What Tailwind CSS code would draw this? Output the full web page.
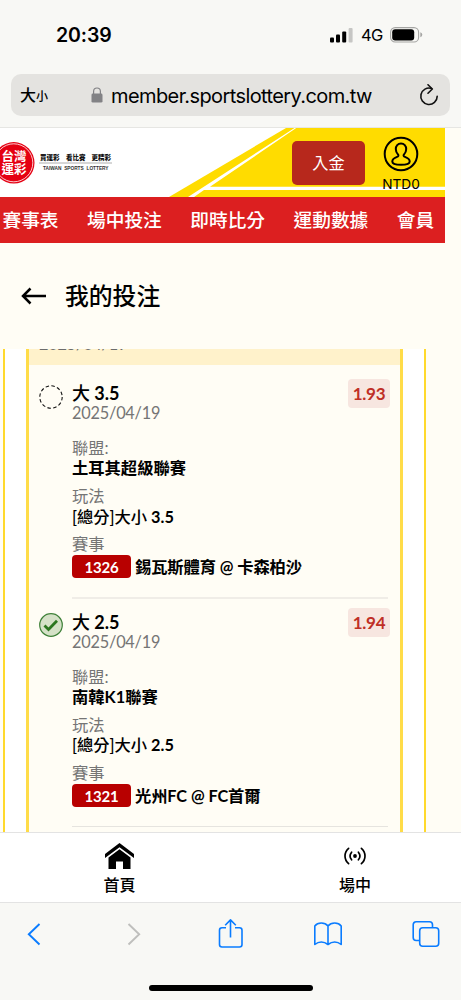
<!DOCTYPE html>
<html lang="zh-Hant">
<head>
  <meta charset="UTF-8" />
  <meta name="viewport" content="width=device-width, initial-scale=1.0" />
  <title>我的投注</title>
  <script src="https://cdn.jsdelivr.net/npm/@tailwindcss/browser@4"></script>
</head>
<body class="w-[461px] h-[1000px] overflow-hidden flex flex-col bg-[#fffdf5] text-black font-['Lato','Noto_Sans_CJK_TC',sans-serif]">

  <!-- Status bar + address bar -->
  <div class="h-[128px] shrink-0 bg-[#f8f8f5] border-b border-[#e6e6e3] font-['Inter','Noto_Sans_CJK_TC',sans-serif]">
    <div class="h-[74px] pt-[21px] pl-[56px] pr-[38px] flex items-start justify-between">
      <span class="text-[19.5px] leading-[28px] font-semibold tracking-[-0.1px]">20:39</span>
      <div class="flex items-center h-[28px]">
        <svg class="w-[23px] h-[15px]" viewBox="0 0 23 15">
          <rect x="0" y="9.5" width="4" height="5" rx="1" />
          <rect x="6" y="6.5" width="4" height="8" rx="1" />
          <rect x="12.2" y="3.5" width="4" height="11" rx="1" />
          <rect x="18.6" y="0" width="4" height="14.5" rx="1" fill="#c6c6c4" />
        </svg>
        <span class="text-[16.5px] ml-[8px] w-[22px] tracking-[-0.6px]">4G</span>
        <svg class="w-[33px] h-[16px] ml-[7px]" viewBox="0 0 33 16">
          <rect x="0.6" y="0.6" width="28" height="14.4" rx="4.6" fill="none" stroke="#a5a5a3" stroke-width="1.1" />
          <rect x="2.2" y="2.2" width="22" height="11.2" rx="3" />
          <path d="M30.3 5.3q2 .8 2 2.5t-2 2.5z" fill="#a5a5a3" />
        </svg>
      </div>
    </div>
    <div class="mx-[11px] h-[42px] rounded-[10px] bg-[#e4e3e0] flex items-center pl-[9px] pr-[11px]">
      <span class="text-[16px] font-medium leading-none">大</span><span class="text-[12px] font-medium leading-none pt-[3px]">小</span>
      <svg class="w-[12px] h-[16px] ml-[43px]" viewBox="0 0 12 16">
        <path d="M2.6 7V4.4a3.4 3.4 0 0 1 6.8 0V7" fill="none" stroke="#828285" stroke-width="1.2" />
        <rect x="0.5" y="6.6" width="11" height="9" rx="1.4" fill="#828285" />
      </svg>
      <span class="ml-[8px] pt-[1px] text-[20px] leading-none whitespace-nowrap w-[262px] tracking-[-0.6px]">member.sportslottery.com.tw</span>
      <svg class="w-[20px] h-[23px] ml-auto" viewBox="0 0 20 23" fill="none" stroke="#111" stroke-width="1.6" stroke-linecap="round" stroke-linejoin="round">
        <path d="M12.600 4.500A8.200 8.200 0 1 0 18.200 12.300" />
        <path d="M9 .8l4.3 4.2L9 9.200" />
      </svg>
    </div>
  </div>

  <!-- Site header -->
  <header class="relative w-[445px] h-[69px] shrink-0 bg-white">
    <svg class="absolute inset-0 w-[445px] h-[69px]" viewBox="0 0 445 69">
      <path d="M169 69L286 0H445V69z" fill="#ffdc00" />
      <path d="M188 69L294.500 0h1.700L210 58.800H445v3.200H204L194 69z" fill="#fff" />
    </svg>
    <div class="relative flex h-full">
      <svg class="w-[115px] h-[69px] shrink-0" viewBox="0 0 115 69">
        <circle cx="13.800" cy="34.800" r="20.700" fill="#e50012" />
        <circle cx="13.800" cy="34.800" r="19" fill="none" stroke="#fff" stroke-width="0.8" />
        <g fill="#fff" font-family="Noto Sans CJK TC" font-weight="700" font-size="12.500">
          <text x="1.500" y="33.200">台灣</text>
          <text x="1.500" y="46">運彩</text>
        </g>
        <g fill="#111" font-family="Noto Sans CJK TC" font-weight="900" font-size="6.500">
          <text x="40" y="31.500">買運彩</text>
          <text x="66" y="31.500">看比賽</text>
          <text x="91.500" y="31.500">更精彩</text>
        </g>
        <path d="M39 35h73" stroke="#999" stroke-width="0.8" />
        <text x="43" y="41.700" font-family="Liberation Sans" font-weight="700" font-size="4.800" word-spacing="1.500" textLength="65.500" fill="#333">TAIWAN SPORTS LOTTERY</text>
      </svg>
      <button class="ml-[177px] mt-[13px] w-[73px] h-[44px] rounded-[5px] bg-[#b7281c] text-white text-[16.200px] leading-none">入金</button>
      <div class="ml-[15px] mt-[8px] w-[42px] flex flex-col items-center">
        <svg class="w-[36px] h-[36px] shrink-0" viewBox="0 0 36 36" fill="none" stroke="#000" stroke-width="2">
          <circle cx="18" cy="18" r="16.300" />
          <path d="M18 7.500c-3.200 0-5.200 2.300-5.200 5.600 0 2.300.8 4 2.200 5.300.7.700.5 1.700-.4 2.200-3.500 1.300-5.300 2.600-5.300 4.800 0 2.300 4 3.300 8.700 3.300s8.700-1 8.700-3.300c0-2.200-1.800-3.500-5.300-4.800-.9-.5-1.100-1.500-.4-2.200 1.400-1.300 2.200-3 2.200-5.300 0-3.300-2-5.600-5.200-5.600z" />
        </svg>
        <span class="text-[13.700px] leading-[25px] font-['Inter',sans-serif]">NTD0</span>
      </div>
    </div>
  </header>
  <nav class="w-[445px] h-[46px] shrink-0 bg-[#dc1f20] text-white text-[18.700px] font-medium flex items-center gap-[28.500px] pl-[2.500px] pt-px whitespace-nowrap overflow-hidden">
    <span>賽事表</span><span>場中投注</span><span>即時比分</span><span>運動數據</span><span>會員</span>
  </nav>

  <!-- Page title -->
  <div class="h-[106px] shrink-0 flex items-center pl-[21px]">
    <svg class="w-[25px] h-[18px]" viewBox="0 0 25 18" fill="none" stroke="#000" stroke-width="2.500">
      <path d="M1.800 9H25M9.500 1.500L2 9L9.500 16.500" />
    </svg>
    <h1 class="ml-[19px] pt-[2px] text-[23.800px] leading-none font-medium">我的投注</h1>
  </div>

  <!-- Bet slip -->
  <main class="h-[483px] shrink-0 flex overflow-hidden">
    <div class="ml-[3px] w-[423px] bg-white border-x-2 border-[#ffd92b] px-[21px]">
      <div class="h-full bg-[#fffdf5] border-x-[3px] border-[#ffdc48]">
        <div class="h-[16px] bg-[#fff2cb] overflow-hidden flex items-start pl-[10px] text-[16.300px] tracking-[-0.2px] text-[#6c6c6c]">
          <span class="mt-[-15px] leading-[20px]">2025/04/19</span>
        </div>

        <section class="pl-[10px] flex h-[229px] pt-[14px]">
          <svg class="w-[24px] h-[24px] mt-[6px] shrink-0" viewBox="0 0 24 24">
            <circle cx="12" cy="12" r="11.200" fill="none" stroke="#111" stroke-width="1.100" stroke-dasharray="3.500 2.365" />
          </svg>
          <div class="ml-[9px] w-[316px] border-b-2 border-[#f0ede7] text-[16.300px] leading-[20px] h-[220px] shrink-0">
            <div class="flex justify-between mr-[-2px]">
              <div class="pt-[4px]">
                <p class="text-[18px] leading-[20px] font-bold"><span class="font-medium">大</span> 3.5</p>
                <p class="text-[#757575] tracking-[-0.2px]">2025/04/19</p>
              </div>
              <span class="w-[42px] h-[29px] rounded-[4px] bg-[#f7e6e0] text-[#bf2f26] text-[17px] leading-[30px] tracking-[-0.3px] font-bold text-center">1.93</span>
            </div>
            <p class="mt-[15px] text-[#757575]">聯盟:</p>
            <p class="font-bold">土耳其超級聯賽</p>
            <p class="mt-[8px] text-[#757575]">玩法</p>
            <p class="pt-px font-bold"><span class="font-medium">[總分]大小</span> 3.5</p>
            <p class="mt-[7px] text-[#757575]">賽事</p>
            <div class="flex items-center h-[24px]">
              <span class="w-[59px] h-[23px] rounded-[4px] bg-[#b80000] text-white text-center text-[15px] leading-[24px] tracking-[-0.2px] font-bold">1326</span>
              <span class="ml-[4px] pt-px font-bold tracking-[-0.1px]">錫瓦斯體育 @ 卡森柏沙</span>
            </div>
          </div>
        </section>

        <section class="pl-[10px] flex h-[240px] pt-[14px]">
          <svg class="w-[24px] h-[24px] mt-[5px] shrink-0" viewBox="0 0 24 24">
            <circle cx="12" cy="12" r="11.300" fill="#d5e1c7" stroke="#3f8139" stroke-width="1.200" />
            <path d="M5.500 12.500l4 4L18 7.800" fill="none" stroke="#2c761f" stroke-width="2.800" />
          </svg>
          <div class="ml-[9px] w-[316px] border-b border-[#e6e4df] text-[16.300px] leading-[20px] h-[219px] shrink-0">
            <div class="flex justify-between mr-[-2px]">
              <div class="pt-[4px]">
                <p class="text-[18px] leading-[20px] font-bold"><span class="font-medium">大</span> 2.5</p>
                <p class="text-[#757575] tracking-[-0.2px] leading-[19px] mb-px">2025/04/19</p>
              </div>
              <span class="w-[42px] h-[29px] rounded-[4px] bg-[#f7e6e0] text-[#bf2f26] text-[17px] leading-[30px] tracking-[-0.3px] font-bold text-center">1.94</span>
            </div>
            <p class="mt-[15px] text-[#757575]">聯盟:</p>
            <p class="font-bold">南韓K1聯賽</p>
            <p class="mt-[8px] text-[#757575]">玩法</p>
            <p class="font-bold"><span class="font-medium">[總分]大小</span> 2.5</p>
            <p class="mt-[8px] text-[#757575]">賽事</p>
            <div class="flex items-center h-[24px]">
              <span class="w-[59px] h-[23px] rounded-[4px] bg-[#b80000] text-white text-center text-[15px] leading-[24px] tracking-[-0.2px] font-bold">1321</span>
              <span class="ml-[4px] pt-px font-bold tracking-[-0.1px]">光州FC @ FC首爾</span>
            </div>
          </div>
        </section>
      </div>
    </div>
  </main>

  <!-- Site tab bar -->
  <div class="h-[71px] shrink-0 bg-white border-y border-[#e3e3e3] flex text-[16px] font-medium leading-[24px]">
    <div class="w-[239px] shrink-0 flex flex-col items-center pt-[10px]">
      <svg class="w-[29px] h-[26px]" viewBox="0 0 29 26">
        <path d="M14.500 0L29 11v4L14.500 4.200 0 15v-4z" />
        <path d="M14.500 6.200L25.500 14.500V26H18v-7.500h-7V26H3.500V14.500z" />
      </svg>
      <span class="mt-[4px]">首頁</span>
    </div>
    <div class="w-[232px] shrink-0 flex flex-col items-center pt-[14px]">
      <svg class="w-[22px] h-[18px]" viewBox="0 0 22 18" fill="none" stroke="#000" stroke-width="1.700" stroke-linecap="round">
        <circle cx="11" cy="9" r="1.900" fill="#000" stroke="none" />
        <path d="M7.600 5.200a6 6 0 0 0 0 7.600M14.400 5.200a6 6 0 0 1 0 7.600M4.600 1.300q-3.600 3.200-3.600 7.700t3.600 7.700M17.400 1.300q3.600 3.200 3.600 7.700t-3.600 7.700" />
      </svg>
      <span class="mt-[8px]">場中</span>
    </div>
  </div>

  <!-- Browser toolbar -->
  <div class="h-[97px] shrink-0 bg-[#f8f8f5] flex flex-col items-center">
    <div class="w-full h-[81px] flex items-start pl-[27px] pt-[15px]">
      <svg class="w-[14px] h-[32px] shrink-0" viewBox="0 0 14 32" fill="none" stroke="#0a7cff" stroke-width="1.900"><path d="M12.500 6L1.800 16.200 12.500 26.500" /></svg>
      <svg class="w-[14px] h-[32px] shrink-0 ml-[86px]" viewBox="0 0 14 32" fill="none" stroke="#bfbfbd" stroke-width="1.900"><path d="M1.500 6L12.200 16.200 1.500 26.500" /></svg>
      <svg class="w-[25px] h-[32px] shrink-0 ml-[77px]" viewBox="0 0 25 32" fill="none" stroke="#0a7cff" stroke-width="1.600" stroke-linejoin="round">
        <path d="M8 9.800H4a2.500 2.500 0 0 0-2.500 2.500v14.200a2.500 2.500 0 0 0 2.500 2.500h17.500a2.500 2.500 0 0 0 2.500-2.500V12.300a2.500 2.500 0 0 0-2.500-2.500H17M12.500 19.500V2M7.200 7.200L12.500 1.900l5.300 5.300" />
      </svg>
      <svg class="w-[28px] h-[32px] shrink-0 ml-[71px]" viewBox="0 0 28 32" fill="none" stroke="#0a7cff" stroke-width="1.600" stroke-linejoin="round">
        <path d="M14 8Q11.500 5 7.300 5T.8 8V26.500Q3.800 24 7.300 24T14 26.500ZM14 8Q16.500 5 20.700 5T27.200 8V26.500Q24.200 24 20.700 24T14 26.500" />
      </svg>
      <svg class="w-[28px] h-[32px] shrink-0 ml-[70px]" viewBox="0 0 28 32" fill="none" stroke="#0a7cff" stroke-width="1.600">
        <rect x="7.700" y="9.700" width="19" height="18.500" rx="3" />
        <path d="M7.700 22.500H4.200a3 3 0 0 1-3-3V6.700a3 3 0 0 1 3-3H17.500a3 3 0 0 1 3 3v3" />
      </svg>
    </div>
    <div class="w-[164px] h-[6px] mt-[1px] rounded-full bg-black"></div>
  </div>
</body>
</html>
